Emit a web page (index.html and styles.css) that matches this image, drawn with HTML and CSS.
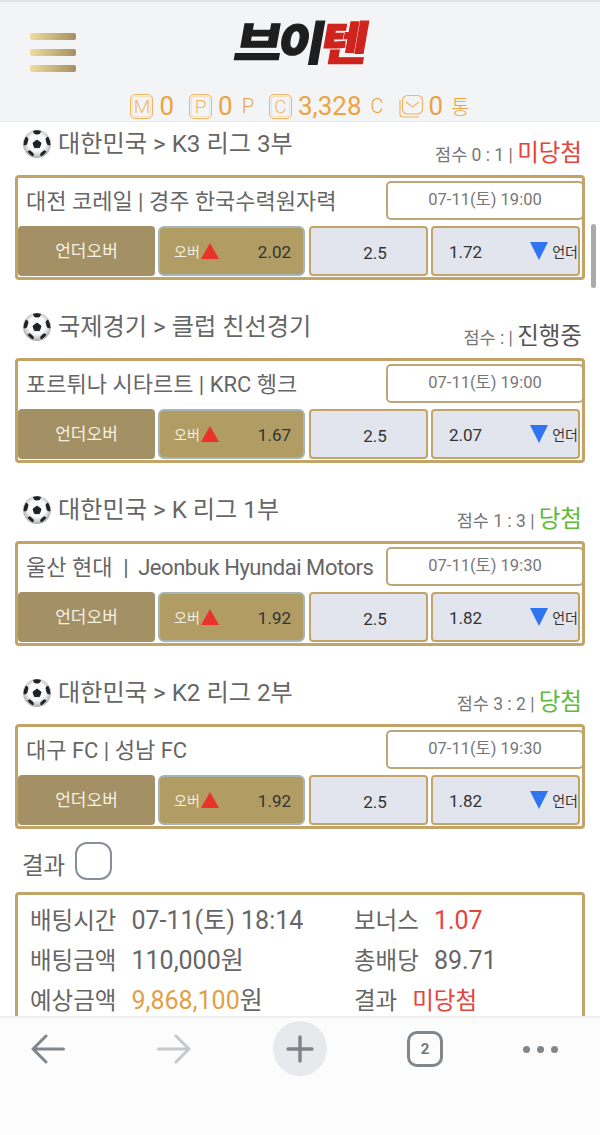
FILE: index.html
```html
<!DOCTYPE HTML>
<html lang=ko>
  <head>
    <title>브이텐</title>
    <meta name=viewport content=width=device-width,initial-scale=1>
    <link rel="stylesheet" href="styles.css">
  </head>
  <body>
    <svg class=defs width=0 height=0>
      <defs>
        <radialGradient id=ballShade cx=.5 cy=.45 r=.55>
          <stop offset=.55 stop-color="#fbfbfb"/>
          <stop offset=1 stop-color="#a9abad"/>
        </radialGradient>
      </defs>
      <symbol id=ball viewBox="0 0 28 28">
        <circle cx=14 cy=14 r=14 fill="url(#ballShade)"/>
        <g fill="#1f2124" stroke="#1f2124" stroke-width=1 stroke-linejoin=round>
          <polygon points="14,10 18,13 16.5,17.6 11.5,17.6 10,13"/>
          <path d="M10.5 1.2 Q14 .2 17.5 1.2 L16.5 3.6 Q14 4.6 11.5 3.6Z"/>
          <path d="M3.2 7 Q1 10.5 1 15 L3.4 14.4 Q4.8 11.5 5 8.6Z"/>
          <path d="M24.8 7 Q27 10.5 27 15 L24.6 14.4 Q23.2 11.5 23 8.6Z"/>
          <path d="M5 21.6 Q7 24.6 10 26 L10.2 23.8 Q8.6 21.8 7 20.8Z"/>
          <path d="M23 21.6 Q21 24.6 18 26 L17.8 23.8 Q19.4 21.8 21 20.8Z"/>
        </g>
      </symbol>
      <symbol id=up viewBox="0 0 18 16"><polygon points="9,0 18,16 0,16" fill="#e8322a"/></symbol>
      <symbol id=down viewBox="0 0 18 18"><polygon points="0,0 18,0 9,18" fill="#2f74f0"/></symbol>
    </svg>

    <header class=top>
      <div class=topRow>
        <div class=burger><i></i><i></i><i></i></div>
        <div class=logo><span>브이</span><em>텐</em></div>
      </div>
      <div class=stats>
        <span class=stat><b class=mark>M</b><span class=num>0</span></span>
        <span class=stat><b class=mark>P</b><span class=num>0</span><small>P</small></span>
        <span class=stat><b class=mark>C</b><span class=num>3,328</span><small>C</small></span>
        <span class=stat>
          <svg class=mail viewBox="0 0 24 24" width=24 height=24 fill=none stroke="#f0b468" stroke-width=1.2>
            <path d="M1 6v14a3 3 0 0 0 3 3h16"/>
            <rect x=3.5 y=1.5 width=20 height=18.5 rx=5 />
            <path d="M7 8l6.5 5 6.5-5"/>
          </svg>
          <span class=num>0</span><small class=kr>통</small>
        </span>
      </div>
    </header>

    <main class=page>
      <section class=game>
        <h2 class=league><svg class=ball><use href="#ball"/></svg>대한민국 &gt; K3 리그 3부</h2>
        <p class=score>점수 0 : 1 | <strong class=lost>미당첨</strong></p>
        <div class=card>
          <div class=match>
            <span class=teams>대전 코레일 | 경주 한국수력원자력</span>
            <span class=date>07-11(토) 19:00</span>
          </div>
          <div class=odds>
            <div class="btn kind">언더오버</div>
            <div class="btn over"><span class=lbl>오버</span><svg class=up><use href="#up"/></svg><span class=rate>2.02</span></div>
            <div class="btn line">2.5</div>
            <div class="btn under"><span class=rate>1.72</span><svg class=down><use href="#down"/></svg><span class=lbl>언더</span></div>
          </div>
        </div>
      </section>

      <section class=game>
        <h2 class=league><svg class=ball><use href="#ball"/></svg>국제경기 &gt; 클럽 친선경기</h2>
        <p class=score>점수 : | <strong class=live>진행중</strong></p>
        <div class=card>
          <div class=match>
            <span class=teams>포르튀나 시타르트 | KRC 헹크</span>
            <span class=date>07-11(토) 19:00</span>
          </div>
          <div class=odds>
            <div class="btn kind">언더오버</div>
            <div class="btn over"><span class=lbl>오버</span><svg class=up><use href="#up"/></svg><span class=rate>1.67</span></div>
            <div class="btn line">2.5</div>
            <div class="btn under"><span class=rate>2.07</span><svg class=down><use href="#down"/></svg><span class=lbl>언더</span></div>
          </div>
        </div>
      </section>

      <section class=game>
        <h2 class=league><svg class=ball><use href="#ball"/></svg>대한민국 &gt; K 리그 1부</h2>
        <p class=score>점수 1 : 3 | <strong class=won>당첨</strong></p>
        <div class=card>
          <div class=match>
            <span class=teams>울산 현대 &nbsp;| <span class=latin>Jeonbuk Hyundai Motors</span></span>
            <span class=date>07-11(토) 19:30</span>
          </div>
          <div class=odds>
            <div class="btn kind">언더오버</div>
            <div class="btn over"><span class=lbl>오버</span><svg class=up><use href="#up"/></svg><span class=rate>1.92</span></div>
            <div class="btn line">2.5</div>
            <div class="btn under"><span class=rate>1.82</span><svg class=down><use href="#down"/></svg><span class=lbl>언더</span></div>
          </div>
        </div>
      </section>

      <section class=game>
        <h2 class=league><svg class=ball><use href="#ball"/></svg>대한민국 &gt; K2 리그 2부</h2>
        <p class=score>점수 3 : 2 | <strong class=won>당첨</strong></p>
        <div class=card>
          <div class=match>
            <span class=teams>대구 FC | 성남 FC</span>
            <span class=date>07-11(토) 19:30</span>
          </div>
          <div class=odds>
            <div class="btn kind">언더오버</div>
            <div class="btn over"><span class=lbl>오버</span><svg class=up><use href="#up"/></svg><span class=rate>1.92</span></div>
            <div class="btn line">2.5</div>
            <div class="btn under"><span class=rate>1.82</span><svg class=down><use href="#down"/></svg><span class=lbl>언더</span></div>
          </div>
        </div>
      </section>

      <div class=resultHead><span>결과</span><label class=check></label></div>

      <div class=summary>
        <div class=sumRow><span class=key>배팅시간</span><span class=val>07-11(토) 18:14</span></div>
        <div class=sumRow><span class=key>보너스</span><span class="val lost">1.07</span></div>
        <div class=sumRow><span class=key>배팅금액</span><span class=val>110,000원</span></div>
        <div class=sumRow><span class=key>총배당</span><span class=val>89.71</span></div>
        <div class=sumRow><span class=key>예상금액</span><span class=val><span class=gold>9,868,100</span>원</span></div>
        <div class=sumRow><span class=key>결과</span><span class="val lost small">미당첨</span></div>
      </div>

      <div class=scrollbar></div>
    </main>

    <nav class=browserBar>
      <svg class=navIcon width=34 height=30 viewBox="0 0 34 30" fill=none stroke="#7f868c" stroke-width=3 stroke-linecap=round stroke-linejoin=round>
        <path d="M32.5 15H2M15 2L2 15l13 13"/>
      </svg>
      <svg class=navIcon width=34 height=30 viewBox="0 0 34 30" fill=none stroke="#c6c8ca" stroke-width=3 stroke-linecap=round stroke-linejoin=round>
        <path d="M1.5 15H32M19 2l13 13-13 13"/>
      </svg>
      <div class=plus>
        <svg width=28 height=28 viewBox="0 0 28 28" fill=none stroke="#7f848c" stroke-width=3.4 stroke-linecap=round>
          <path d="M14 2v24M2 14h24"/>
        </svg>
      </div>
      <div class=tabs>2</div>
      <div class=more><i></i><i></i><i></i></div>
    </nav>
  </body>
</html>
```

FILE: styles.css
```css
html, body {
  margin: 0;
  width: 100%;
  height: 100%;
}
body {
  height: 1135px;
  display: flex;
  flex-direction: column;
  overflow: hidden;
  background: #fff;
  color: #666;
  font-family: Roboto, "Noto Sans CJK KR", sans-serif;
}
.defs {
  position: absolute;
}

/* top */
.top {
  flex: none;
  box-sizing: border-box;
  height: 122px;
  background: #f3f4f6;
  border-top: 2px solid #dfe2e6;
  border-bottom: 1px solid #e8e9eb;
}
.topRow {
  position: relative;
  height: 91px;
  display: flex;
  justify-content: center;
  align-items: flex-start;
}
.burger {
  position: absolute;
  left: 30px;
  top: 31px;
  display: flex;
  flex-direction: column;
  gap: 9px;
}
.burger i {
  display: block;
  width: 46px;
  height: 7px;
  border-radius: 2px;
  background: linear-gradient(90deg, #efdc9f, #a88e5e);
}
.logo {
  margin: 8px 0 0 0;
  font-family: "Noto Sans CJK KR", sans-serif;
  font-weight: 900;
  font-size: 46px;
  line-height: 60px;
  letter-spacing: -4px;
  color: #1e1e1e;
  -webkit-text-stroke: 1.2px #1e1e1e;
  transform: skewX(-10deg) scaleX(1.12);
  display: flex;
}
.logo em {
  font-style: normal;
  color: #cf241d;
  -webkit-text-stroke: 1.2px #cf241d;
}
.stats {
  display: flex;
  justify-content: center;
  gap: 15px;
  color: #eda33f;
}
.stat {
  display: flex;
  align-items: center;
  gap: 6px;
  height: 26px;
}
.mark {
  box-sizing: border-box;
  width: 23px;
  height: 25px;
  border: 1px solid #f0b468;
  border-radius: 5px;
  box-shadow: inset 0 0 0 1px #f3f4f6, inset 0 0 0 2px #f8dfbd;
  color: #f0b468;
  font-weight: 300;
  font-size: 19px;
  line-height: 23px;
  text-align: center;
}
.num {
  font-size: 26px;
  line-height: 26px;
}
.stat small {
  margin-left: 3px;
  font-size: 20px;
  font-weight: 300;
}
.stat small.kr {
  font-size: 20px;
  margin-left: 2px;
}

/* list */
.page {
  position: relative;
  flex: 1;
  overflow: hidden;
  min-height: 0;
}
.game {
  position: relative;
  box-sizing: border-box;
  height: 183px;
  padding: 53px 15px 0;
}
.league {
  position: absolute;
  left: 23px;
  top: 6px;
  margin: 0;
  display: flex;
  align-items: center;
  gap: 7px;
  font-size: 24.2px;
  font-weight: 400;
  line-height: 32px;
  color: #666;
}
.ball {
  width: 28px;
  height: 28px;
}
.score {
  position: absolute;
  right: 18px;
  top: 13px;
  margin: 0;
  font-size: 17.5px;
  line-height: 36px;
  color: #777;
}
.score strong {
  font-size: 23.5px;
  font-weight: 400;
}
.lost { color: #e5433b; }
.won { color: #5dbb3c; }
.live { color: #555; }
.gold { color: #e0a046; }

.card {
  box-sizing: border-box;
  height: 105px;
  border: 3px solid #c3a468;
  border-radius: 4px;
  padding: 3px 0 0 0;
  background: #fff;
}
.match {
  display: flex;
  justify-content: space-between;
  align-items: center;
  height: 39px;
  padding-left: 8px;
}
.teams {
  font-size: 22px;
  line-height: 36px;
  margin-top: 2px;
  color: #666;
  white-space: nowrap;
}
.latin {
  margin-left: 4px;
  letter-spacing: -.45px;
}
.date {
  box-sizing: border-box;
  width: 198px;
  height: 39px;
  margin-right: -2px;
  border: 2px solid #bda677;
  border-radius: 5px;
  text-align: center;
  font-size: 16.5px;
  line-height: 33px;
  color: #777;
  background: #fff;
}
.odds {
  display: grid;
  grid-template-columns: 137px 147px 120px 149px;
  gap: 3px;
  height: 50px;
  margin-top: 6px;
}
.btn {
  box-sizing: border-box;
  display: flex;
  align-items: center;
  border-radius: 4px;
  height: 50px;
  color: #333;
  font-size: 17px;
}
.kind {
  justify-content: center;
  background: #a39064;
  color: #f5f1e4;
  font-size: 17px;
  padding-bottom: 4px;
}
.over {
  background: #b19c64;
  border: 2px solid #a5b5b5;
  border-radius: 6px;
  padding: 0 12px 0 14px;
}
.line {
  justify-content: center;
  margin-left: 1px;
  background: #e2e5ed;
  border: 2px solid #c3a468;
  padding: 3px 0 0 13px;
}
.under {
  background: #e2e5ed;
  border: 2px solid #c3a468;
  padding: 0 0 0 16px;
}
.rate {
  padding-top: 2px;
}
.lbl {
  font-size: 14px;
}
.over .lbl {
  color: #f3efe0;
}
.over .rate {
  margin-left: auto;
}
.up {
  width: 18px;
  height: 16px;
  margin-left: 1px;
}
.down {
  width: 18px;
  height: 18px;
  margin-left: auto;
  margin-right: 4px;
}

/* result */
.resultHead {
  display: flex;
  align-items: flex-end;
  gap: 10px;
  height: 40px;
  margin: -11px 0 0 22px;
  font-size: 23.5px;
  line-height: 33px;
}
.check {
  box-sizing: border-box;
  width: 37px;
  height: 38px;
  border: 2px solid #8a8e96;
  border-radius: 12px;
  transform: translateY(-3px);
}
.summary {
  box-sizing: border-box;
  display: grid;
  grid-template-columns: 324px 1fr;
  align-content: start;
  height: 150px;
  margin: 9px 15px 0;
  padding: 6px 12px 0;
  border: 3px solid #c3a468;
  border-radius: 4px;
}
.sumRow {
  display: flex;
  gap: 15px;
  height: 40px;
  align-items: center;
  font-size: 23.5px;
  line-height: 40px;
  white-space: nowrap;
}
.val {
  font-size: 25px;
}
.val.small {
  font-size: 23.5px;
}
.scrollbar {
  position: absolute;
  left: 591px;
  top: 102px;
  width: 5px;
  height: 64px;
  border-radius: 3px;
  background: #a9abaf;
}

/* browser bar */
.browserBar {
  flex: none;
  box-sizing: border-box;
  height: 119px;
  padding: 3px 0 0 31px;
  display: grid;
  grid-template-columns: 126px 116px 134px 116px 1fr;
  align-items: start;
  background: #fcfcfc;
  border-top: 2px solid #efeff0;
}
.navIcon {
  margin-top: 13px;
}
.plus {
  width: 54px;
  height: 55px;
  border-radius: 50%;
  background: #e8e9ed;
  display: flex;
  align-items: center;
  justify-content: center;
}
.tabs {
  box-sizing: border-box;
  width: 36px;
  height: 36px;
  margin-top: 10px;
  border: 3px solid #7f868c;
  border-radius: 10px;
  text-align: center;
  font-size: 15px;
  font-weight: 700;
  line-height: 31px;
  color: #70767c;
}
.more {
  display: flex;
  gap: 7px;
  margin-top: 25px;
}
.more i {
  display: block;
  width: 7px;
  height: 7px;
  border-radius: 50%;
  background: #7f868c;
}
```
